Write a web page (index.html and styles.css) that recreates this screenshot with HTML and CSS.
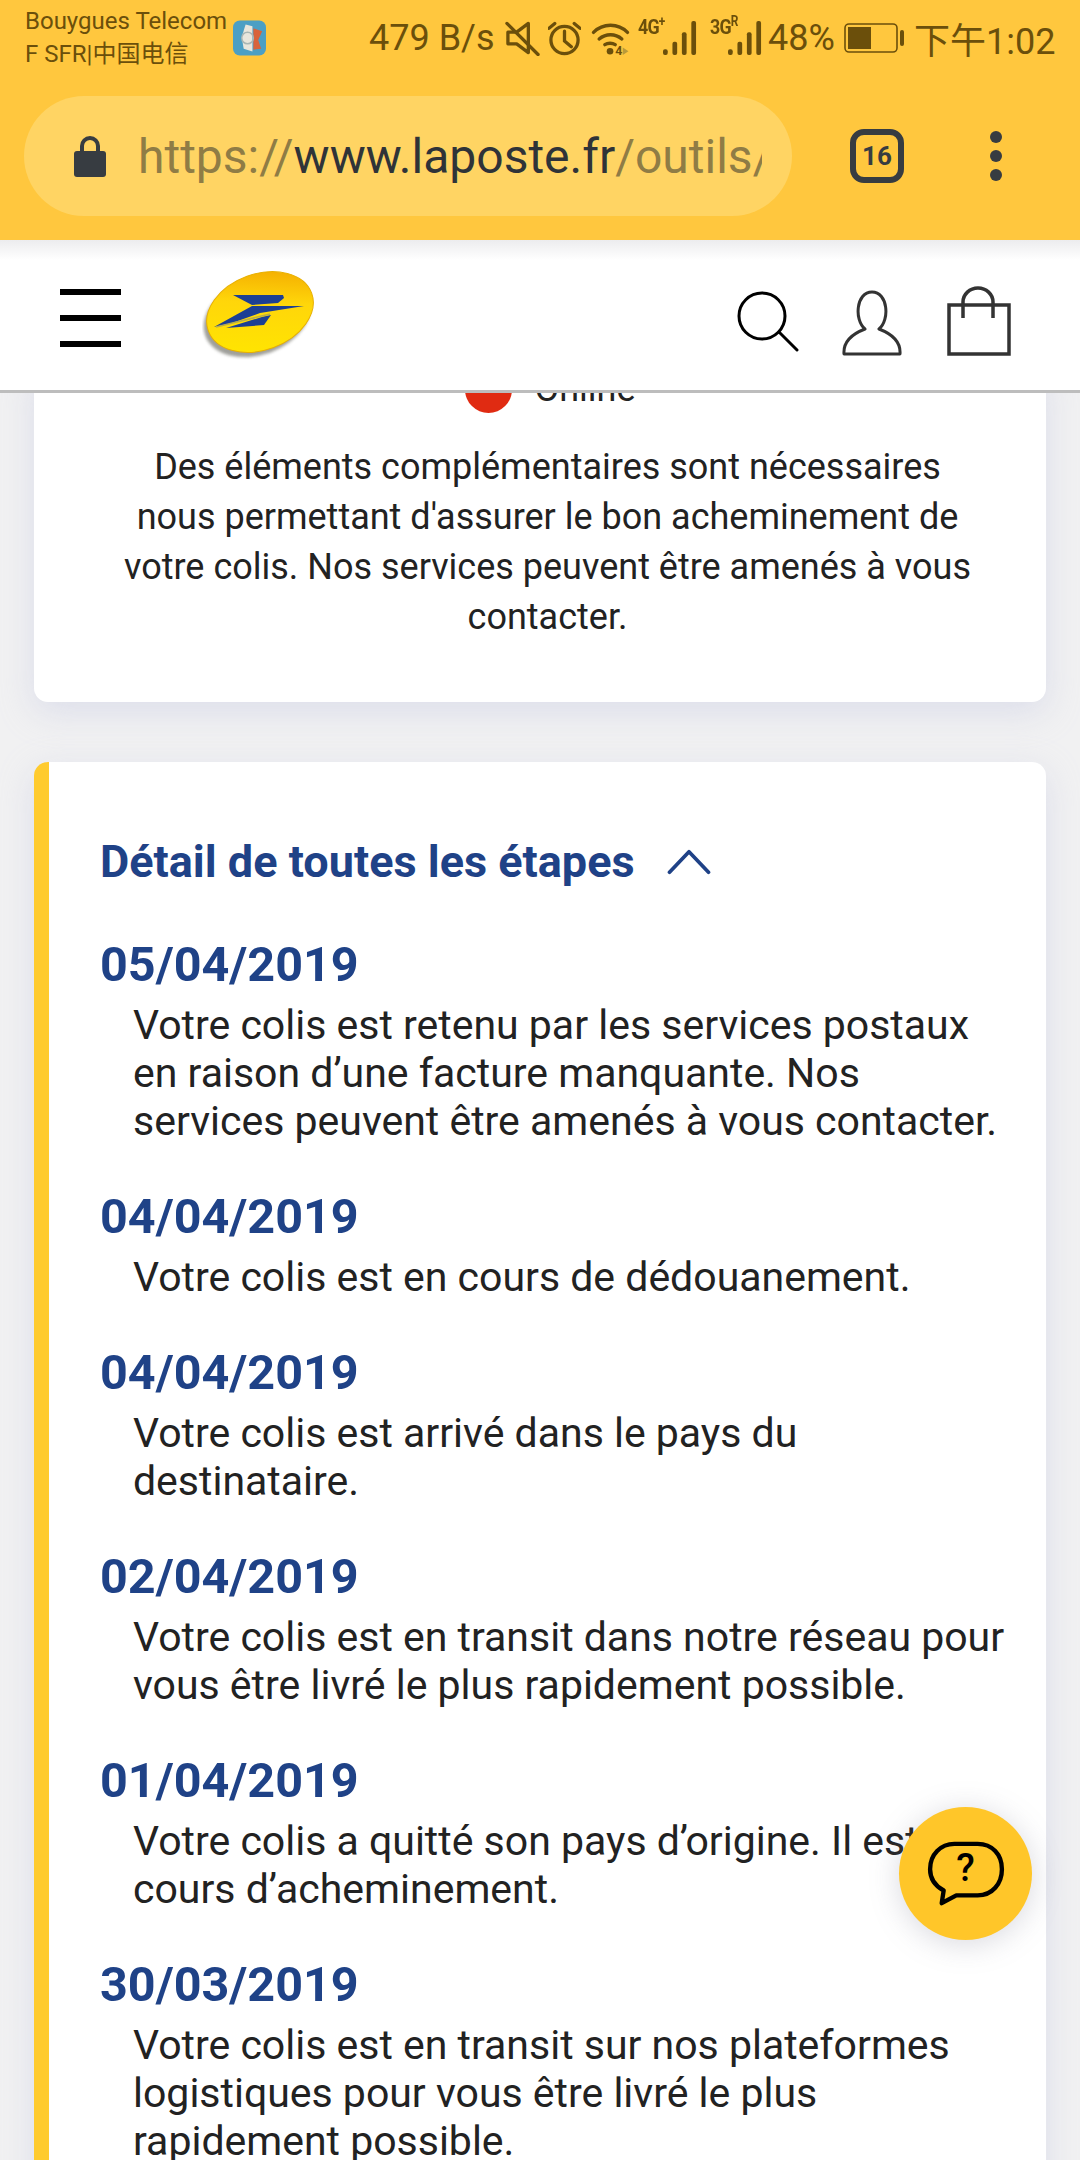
FILE: index.html
```html
<!DOCTYPE html>
<html lang="fr">

<head>
    <meta charset="UTF-8">
    <meta name="viewport" content="width=device-width, initial-scale=1.0">
    <title>La Poste - Suivi de colis</title>
    <link rel="stylesheet" href="styles.css">
</head>

<body>
    <div class="phone">
        <div class="chrome">
            <div class="status-bar">
                <div class="carrier">
                    <p>Bouygues Telecom</p>
                    <p>F SFR|中国电信</p>
                </div>
                <svg class="app-icon" viewBox="0 0 34 36">
                    <rect width="34" height="36" rx="7" fill="#4c9fc4" />
                    <path d="M13 4l7 2v26l-9-3-2-12z" fill="#e9e6dc" />
                    <path d="M21 8l9 3-4 9 3 9-8 1z" fill="#d9633a" />
                    <circle cx="15" cy="18" r="6" fill="none" stroke="#a9b6b4" stroke-width="1.5" />
                </svg>
                <span class="speed">479 B/s</span>
                <svg class="icon-mute" viewBox="0 0 36 36" fill="none" stroke="#6b4f0b" stroke-width="3.4">
                    <path d="M12 12H3v12h9l12 9V3z" stroke-linejoin="round" />
                    <path d="M2 3l32 32" stroke-linecap="round" />
                </svg>
                <svg class="icon-alarm" viewBox="0 0 34 36" fill="none" stroke="#6b4f0b" stroke-width="3.4">
                    <circle cx="17" cy="20" r="14" />
                    <path d="M17 11v10l7 6M1 8l6-5M33 8l-6-5" stroke-linecap="round" />
                </svg>
                <svg class="icon-wifi" viewBox="0 0 40 36" fill="none" stroke="#6b4f0b" stroke-width="3.6">
                    <path d="M2 12c10-10 26-10 36 0M8 19c7-6 17-6 24 0M14 25c3-2 8-2 11 0" stroke-linecap="round" />
                    <circle cx="19.500" cy="32" r="3.500" fill="#6b4f0b" stroke="none" />
                    <path d="M33 28l6 4-6 4z" fill="#b99a3a" stroke="none" />
                    <text x="25" y="36" class="wifi-num">4</text>
                </svg>
                <div class="signal sig-first">
                    <span class="net">4G<sup>+</sup></span>
                    <svg viewBox="0 0 36 36" fill="#6b4f0b">
                        <rect x="0" y="30" width="5" height="6" rx="2" />
                        <rect x="10" y="22" width="5" height="14" rx="2" />
                        <rect x="20" y="12" width="5" height="24" rx="2" />
                        <rect x="30" y="0" width="5" height="36" rx="2" />
                    </svg>
                </div>
                <div class="signal sig-second">
                    <span class="net">3G<sup>R</sup></span>
                    <svg viewBox="0 0 36 36" fill="#6b4f0b">
                        <rect x="0" y="30" width="5" height="6" rx="2" />
                        <rect x="10" y="22" width="5" height="14" rx="2" />
                        <rect x="20" y="12" width="5" height="24" rx="2" />
                        <rect x="30" y="0" width="5" height="36" rx="2" />
                    </svg>
                </div>
                <span class="battery-pct">48%</span>
                <svg class="icon-battery" viewBox="0 0 60 30">
                    <rect x="1" y="1" width="52" height="28" rx="4" fill="none" stroke="#6b4f0b" stroke-width="1.600" />
                    <rect x="4" y="4" width="23" height="22" fill="#6b4f0b" />
                    <rect x="56" y="7" width="4" height="16" rx="2" fill="#6b4f0b" />
                </svg>
                <span class="clock">下午1:02</span>
            </div>
            <div class="toolbar">
                <div class="url-pill">
                    <svg class="icon-lock" viewBox="0 0 32 42">
                        <path d="M8 18v-7a8 8 0 0 1 16 0v7" fill="none" stroke="#373c41" stroke-width="4" />
                        <rect y="16" width="32" height="26" rx="3" fill="#373c41" />
                    </svg>
                    <div class="url"><span class="dim">https://</span>www.laposte.fr<span class="dim">/outils/suivi</span></div>
                </div>
                <div class="tabs-count">16</div>
                <div class="menu-dots"><i></i><i></i><i></i></div>
            </div>
        </div>

        <header class="site-header">
            <div class="burger"><i></i><i></i><i></i></div>
            <svg class="logo" viewBox="0 0 114 90">
                <defs>
                    <linearGradient id="logoFill" x1="0.2" y1="1" x2="0.8" y2="0">
                        <stop offset="0" stop-color="#ffe600" />
                        <stop offset="0.6" stop-color="#ffd60a" />
                        <stop offset="1" stop-color="#f3a900" />
                    </linearGradient>
                    <filter id="logoBlur" x="-10%" y="-10%" width="120%" height="120%">
                        <feGaussianBlur stdDeviation="1.5" />
                    </filter>
                </defs>
                <ellipse cx="55" cy="47" rx="55" ry="38" transform="rotate(-20 55 47)" fill="#77776f" opacity="0.7" filter="url(#logoBlur)" />
                <ellipse cx="58" cy="42" rx="55" ry="38" transform="rotate(-20 58 42)" fill="url(#logoFill)" stroke="#e8b000" stroke-width="1" />
                <path d="M31 25H81L82 28 76 33 50 35z" fill="#1c3f94" />
                <path d="M102 36H50L12 57 30 53 58 43z" fill="#1c3f94" />
                <path d="M69 45L62 55 24 58 60 47z" fill="#1c3f94" />
                <path d="M14 57L68 44" stroke="#b8ad4a" stroke-width="1.500" />
            </svg>
            <div class="header-icons">
                <svg class="icon-search" viewBox="0 0 62 62" fill="none" stroke="#000" stroke-width="3">
                    <circle cx="25" cy="25" r="23" />
                    <path d="M42 41l18 18" stroke-linecap="round" />
                </svg>
                <svg class="icon-user" viewBox="0 0 60 66" fill="none" stroke="#333" stroke-width="3">
                    <path d="M2 64c-1-13 8-20 21-25-11-9-9-37 7-37s18 28 7 37c13 5 22 12 21 25z" stroke-linejoin="round" />
                </svg>
                <svg class="icon-bag" viewBox="0 0 64 70" fill="none" stroke="#333" stroke-width="3.500">
                    <rect x="2" y="19" width="60" height="49" />
                    <path d="M16 32V16a15 14 0 0 1 30 0v16" />
                </svg>
            </div>
        </header>

        <main class="content">
            <section class="card card-notice">
                <div class="state-row"><span class="state-dot"></span><span>Online</span></div>
                <p class="notice">Des éléments complémentaires sont nécessaires nous permettant d'assurer le bon acheminement de votre colis. Nos services peuvent être amenés à vous contacter.</p>
            </section>

            <section class="card card-steps">
                <h2 class="steps-title">Détail de toutes les étapes
                    <svg class="chevron" viewBox="0 0 46 28" fill="none" stroke="#1f4287" stroke-width="4">
                        <path d="M2 25L23 3l21 22" stroke-linecap="round" stroke-linejoin="round" />
                    </svg>
                </h2>
                <div class="step">
                    <h3>05/04/2019</h3>
                    <p>Votre colis est retenu par les services postaux en raison d’une facture manquante. Nos services peuvent être amenés à vous contacter.</p>
                </div>
                <div class="step">
                    <h3>04/04/2019</h3>
                    <p>Votre colis est en cours de dédouanement.</p>
                </div>
                <div class="step">
                    <h3>04/04/2019</h3>
                    <p>Votre colis est arrivé dans le pays du destinataire.</p>
                </div>
                <div class="step">
                    <h3>02/04/2019</h3>
                    <p>Votre colis est en transit dans notre réseau pour vous être livré le plus rapidement possible.</p>
                </div>
                <div class="step">
                    <h3>01/04/2019</h3>
                    <p>Votre colis a quitté son pays d’origine. Il est en cours d’acheminement.</p>
                </div>
                <div class="step">
                    <h3>30/03/2019</h3>
                    <p>Votre colis est en transit sur nos plateformes logistiques pour vous être livré le plus rapidement possible.</p>
                </div>
            </section>
        </main>

        <button class="help-fab">
            <svg viewBox="0 0 80 68" fill="none" stroke="#000" stroke-width="4.500">
                <path d="M28 3H52C67 3 77 14 77 29S67 56 52 56H30L15 64 17 51C8 46 3 38 3 29 3 14 14 3 28 3z" stroke-linejoin="round" />
            </svg>
            <span>?</span>
        </button>
    </div>
</body>

</html>
```

FILE: styles.css
```css
* {
    box-sizing: border-box;
}

body {
    margin: 0;
    font-family: Roboto, "Noto Sans CJK SC", sans-serif;
    color: #222;
    background-color: #f1f1f2;
}

p,
h2,
h3 {
    margin: 0;
}

.phone {
    position: relative;
    width: 1080px;
    height: 2160px;
    overflow: hidden;
    display: flex;
    flex-direction: column;
}

/* browser chrome */
.chrome {
    height: 240px;
    flex: none;
    background-color: #ffc73e;
}

.status-bar {
    height: 76px;
    padding-left: 25px;
    display: flex;
    align-items: center;
    color: #6b4f0b;
}

.carrier {
    width: 208px;
    font-size: 24px;
    line-height: 33px;
    white-space: nowrap;
}

.app-icon {
    width: 33px;
    height: 36px;
    margin-right: 103px;
}

.speed {
    width: 136px;
    font-size: 36px;
    white-space: nowrap;
}

.icon-mute {
    width: 35px;
    height: 36px;
    margin-right: 8px;
}

.icon-alarm {
    width: 33px;
    height: 36px;
    margin-right: 10px;
}

.icon-wifi {
    width: 39px;
    height: 34px;
    margin-right: 8px;
}

.wifi-num {
    font-size: 13px;
    font-weight: 700;
    fill: #6b4f0b;
    stroke: none;
}

.signal {
    position: relative;
    height: 36px;
    display: flex;
    justify-content: flex-end;
}

.sig-first {
    width: 59px;
    margin-right: 13px;
}

.sig-second {
    width: 52px;
    margin-right: 6px;
}

.signal svg {
    width: 34px;
    height: 36px;
}

.net {
    position: absolute;
    left: 0;
    top: -3px;
    font-size: 21px;
    font-weight: 700;
    line-height: 20px;
    letter-spacing: -1px;
    white-space: nowrap;
    transform: scaleX(0.85);
    transform-origin: left;
}

.net sup {
    font-size: 14px;
    line-height: 0;
}

.battery-pct {
    width: 76px;
    font-size: 36px;
}

.icon-battery {
    width: 60px;
    height: 30px;
    margin-right: 10px;
}

.clock {
    font-size: 36px;
    white-space: nowrap;
}

.toolbar {
    padding: 20px 0 0 24px;
    display: flex;
    align-items: center;
}

.url-pill {
    width: 768px;
    height: 120px;
    padding: 0 30px 0 50px;
    display: flex;
    align-items: center;
    border-radius: 60px;
    background-color: #ffd463;
}

.icon-lock {
    width: 32px;
    height: 42px;
    flex: none;
    margin-right: 32px;
}

.url {
    flex: 1;
    overflow: hidden;
    font-size: 48px;
    white-space: nowrap;
    color: #2f3338;
}

.dim {
    color: #8f7c45;
}

.tabs-count {
    width: 54px;
    height: 54px;
    margin-left: 58px;
    display: flex;
    align-items: center;
    justify-content: center;
    border: 6px solid #373c41;
    border-radius: 14px;
    font-size: 26px;
    font-weight: 700;
    color: #373c41;
}

.menu-dots {
    margin-left: 86px;
    display: flex;
    flex-direction: column;
    gap: 7px;
}

.menu-dots i {
    width: 12px;
    height: 12px;
    border-radius: 50%;
    background-color: #373c41;
}

/* site header */
.site-header {
    position: relative;
    z-index: 2;
    height: 153px;
    flex: none;
    padding: 6px 0 0 60px;
    display: flex;
    align-items: center;
    border-bottom: 3px solid #bdbdbd;
    background: linear-gradient(#ececee, #fff 20px);
}

.burger {
    width: 61px;
    display: flex;
    flex-direction: column;
    gap: 20px;
}

.burger i {
    height: 6px;
    background-color: #000;
}

.logo {
    width: 114px;
    height: 90px;
    margin-left: 81px;
    margin-top: -6px;
}

.header-icons {
    margin-left: 421px;
    margin-top: 6px;
    display: flex;
    align-items: flex-end;
}

.icon-search {
    width: 62px;
    height: 62px;
    margin-bottom: 3px;
}

.icon-user {
    width: 60px;
    height: 66px;
    margin-left: 43px;
}

.icon-bag {
    width: 64px;
    height: 70px;
    margin-left: 45px;
}

/* page content */
.content {
    flex: 1;
    overflow: hidden;
    padding: 0 34px;
}

.card {
    border-radius: 14px;
    background-color: #fff;
    box-shadow: 0 10px 34px rgba(190, 196, 225, 0.42);
}

.card-notice {
    margin-top: -29px;
    padding: 0 70px 60px 85px;
    text-align: center;
}

.state-row {
    height: 50px;
    margin-left: 6px;
    display: flex;
    align-items: center;
    justify-content: center;
    gap: 22px;
    font-size: 36px;
}

.state-dot {
    width: 47px;
    height: 47px;
    border-radius: 50%;
    background-color: #e02b12;
}

.notice {
    margin-top: 28px;
    font-size: 36px;
    line-height: 50px;
}

.card-steps {
    margin-top: 60px;
    padding: 61px 34px 100px 51px;
    border-left: 15px solid #ffcb2e;
}

.steps-title {
    display: flex;
    align-items: center;
    gap: 32px;
    font-size: 45px;
    font-weight: 700;
    line-height: 78px;
    color: #1f4287;
}

.chevron {
    width: 44px;
    height: 26px;
}

.step {
    margin-bottom: 36px;
}

.steps-title + .step {
    margin-top: 28px;
}

.step h3 {
    font-size: 48.5px;
    font-weight: 700;
    line-height: 72px;
    color: #1f4287;
}

.step p {
    padding-left: 33px;
    font-size: 41px;
    line-height: 48px;
}

.help-fab {
    position: absolute;
    z-index: 3;
    left: 899px;
    top: 1807px;
    width: 133px;
    height: 133px;
    padding: 0;
    border: 0;
    border-radius: 50%;
    display: flex;
    align-items: center;
    justify-content: center;
    background-color: #ffc629;
    box-shadow: 0 4px 30px rgba(120, 120, 140, 0.28);
}

.help-fab svg {
    width: 78px;
    height: 66px;
}

.help-fab span {
    position: absolute;
    left: 0;
    right: 0;
    top: 43px;
    font-family: Roboto, sans-serif;
    font-size: 38px;
    font-weight: 500;
    line-height: 36px;
    text-align: center;
    color: #000;
}
```
